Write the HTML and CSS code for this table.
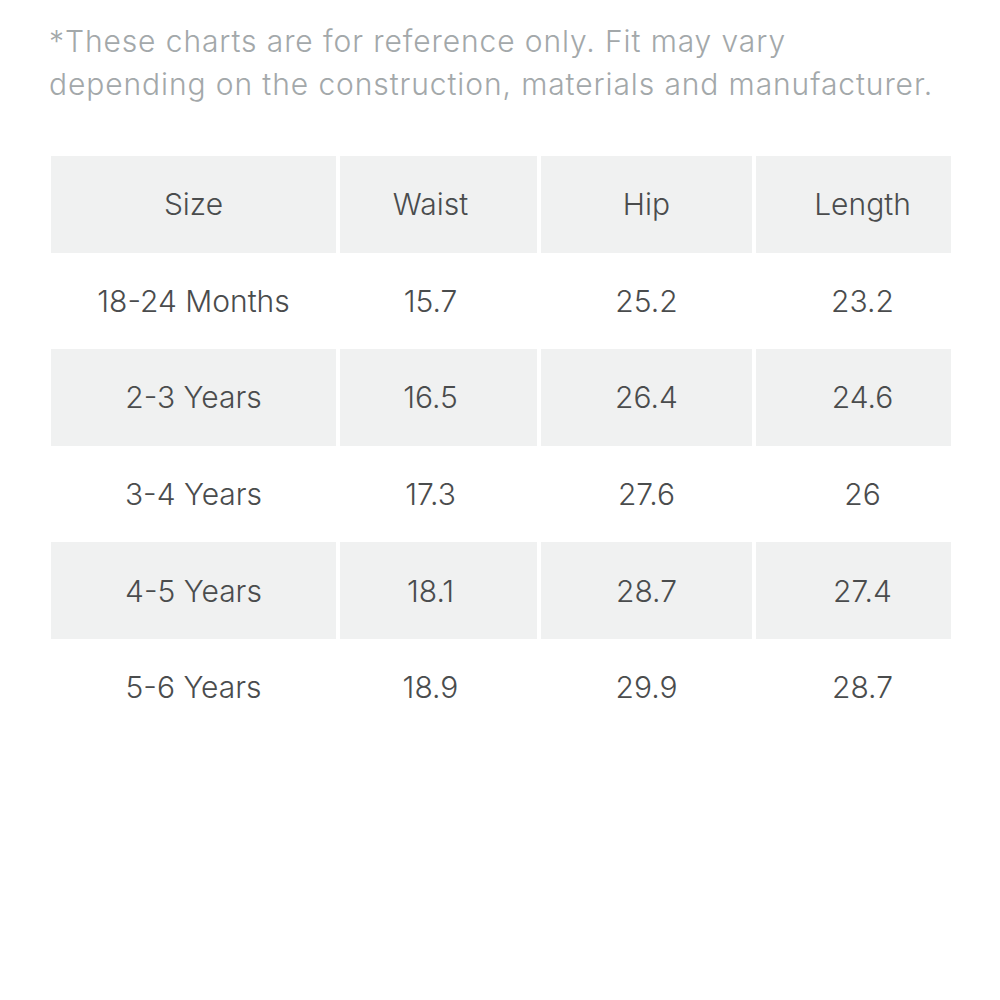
FILE: index.html
```html
<!DOCTYPE html>
<html>
<head>
<meta charset="utf-8">
<link rel="stylesheet" href="styles.css">
</head>
<body>
<div class="page">
  <p class="note">*These charts are for reference only. Fit may vary depending on the construction, materials and manufacturer.</p>
  <div class="chart">
    <div class="row shade"><div class="cell">Size</div><div class="cell">Waist</div><div class="cell">Hip</div><div class="cell">Length</div></div>
    <div class="row"><div class="cell">18-24 Months</div><div class="cell">15.7</div><div class="cell">25.2</div><div class="cell">23.2</div></div>
    <div class="row shade"><div class="cell">2-3 Years</div><div class="cell">16.5</div><div class="cell">26.4</div><div class="cell">24.6</div></div>
    <div class="row"><div class="cell">3-4 Years</div><div class="cell">17.3</div><div class="cell">27.6</div><div class="cell">26</div></div>
    <div class="row shade"><div class="cell">4-5 Years</div><div class="cell">18.1</div><div class="cell">28.7</div><div class="cell">27.4</div></div>
    <div class="row"><div class="cell">5-6 Years</div><div class="cell">18.9</div><div class="cell">29.9</div><div class="cell">28.7</div></div>
  </div>
</div>
</body>
</html>
```
FILE: styles.css
```css
html, body {
  margin: 0;
  padding: 0;
  background: #ffffff;
}
.page {
  padding: 20px 40px 0 49px;
  font-family: "Inter", "Liberation Sans", sans-serif;
  font-weight: 300;
}
.note {
  margin: 0;
  font-size: 30px;
  line-height: 43px;
  letter-spacing: 0.9px;
  color: #a3a8aa;
  width: 892px;
}
.chart {
  margin-top: 50px;
  margin-left: 2px;
  width: 900px;
  display: flex;
  flex-direction: column;
}
.row {
  display: grid;
  grid-template-columns: 285px 197px 211px 195px;
  column-gap: 4px;
  height: 96.6px;
}
.cell {
  display: flex;
  align-items: center;
  justify-content: center;
  font-size: 30px;
  color: #4a4c4d;
}
.cell:nth-child(2) {
  padding-right: 16px;
}
.cell:nth-child(4) {
  padding-left: 18px;
}
.shade .cell {
  background: #f0f1f1;
}
```
